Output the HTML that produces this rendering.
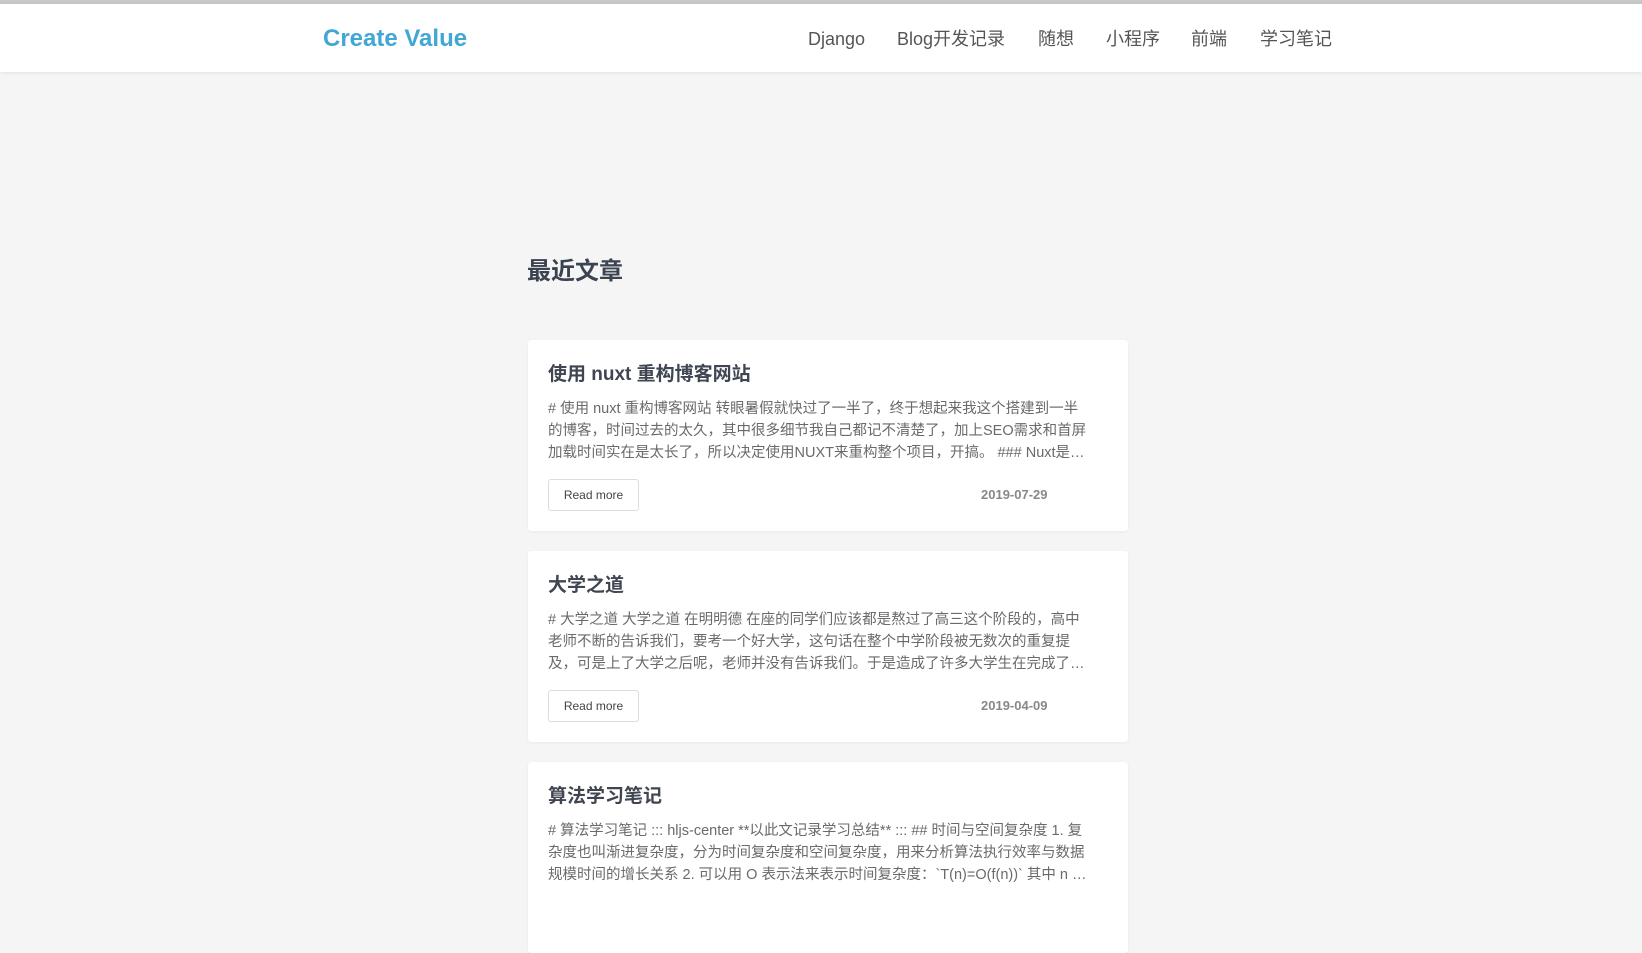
<!DOCTYPE html>
<html><head><meta charset="utf-8"><style>
*{margin:0;padding:0;box-sizing:border-box}
body{width:1642px;height:892px;overflow:hidden;background:#f5f5f5;font-family:"Liberation Sans","Noto Sans CJK SC",sans-serif;border-top:4px solid #c8c8c8}
.hd{height:68px;background:#fff;box-shadow:0 1px 4px rgba(0,0,0,.08);position:relative}
.logo{position:absolute;left:323px;top:21px;font-size:24px;font-weight:bold;color:#42a6d6;line-height:28px}
.nav a{position:absolute;top:22px;font-size:18px;color:#555;text-decoration:none;line-height:26px;height:26px}
h2{position:absolute;left:527px;top:251px;font-size:24px;color:#3c4350;font-weight:bold}
.card{position:absolute;left:528px;width:600px;height:191px;background:#fff;border-radius:3px;box-shadow:0 1px 3px rgba(0,0,0,.05);padding:20px 40px 0 20px}
.card h3{font-size:19px;color:#3f4652;margin-top:3px;line-height:24px}
.card p{font-size:14.5px;color:#6a6a6a;line-height:22px;margin-top:11px;display:-webkit-box;-webkit-line-clamp:3;-webkit-box-orient:vertical;overflow:hidden;height:66px}
.btn{position:absolute;left:20px;top:139px;width:91px;height:32px;border:1px solid #ddd;border-radius:3px;font-size:12px;color:#444;text-align:center;line-height:30px}
.date{position:absolute;left:453px;top:147px;font-size:13px;font-weight:bold;color:#888}
</style></head><body>
<div class="hd"><div class="logo">Create Value</div>
<div class="nav"><a style="left:808px">Django</a><a style="left:897px">Blog开发记录</a><a style="left:1038px">随想</a><a style="left:1106px">小程序</a><a style="left:1191px">前端</a><a style="left:1260px">学习笔记</a></div></div>
<h2>最近文章</h2>
<div class="card" style="top:340px"><h3>使用 nuxt 重构博客网站</h3><p># 使用 nuxt 重构博客网站 转眼暑假就快过了一半了，终于想起来我这个搭建到一半的博客，时间过去的太久，其中很多细节我自己都记不清楚了，加上SEO需求和首屏加载时间实在是太长了，所以决定使用NUXT来重构整个项目，开搞。 ### Nuxt是什么 Nuxt.js 是一个基于 Vue.js 的通用应用框架</p><div class="btn">Read more</div><div class="date">2019-07-29</div></div>
<div class="card" style="top:551px"><h3>大学之道</h3><p># 大学之道 大学之道 在明明德 在座的同学们应该都是熬过了高三这个阶段的，高中老师不断的告诉我们，要考一个好大学，这句话在整个中学阶段被无数次的重复提及，可是上了大学之后呢，老师并没有告诉我们。于是造成了许多大学生在完成了高考这个目标之后就迷失了方向</p><div class="btn">Read more</div><div class="date">2019-04-09</div></div>
<div class="card" style="top:762px"><h3>算法学习笔记</h3><p># 算法学习笔记 ::: hljs-center **以此文记录学习总结** ::: ## 时间与空间复杂度 1. 复杂度也叫渐进复杂度，分为时间复杂度和空间复杂度，用来分析算法执行效率与数据规模时间的增长关系 2. 可以用 O 表示法来表示时间复杂度：`T(n)=O(f(n))` 其中 n 表示数据规模的大小</p></div>
</body></html>
